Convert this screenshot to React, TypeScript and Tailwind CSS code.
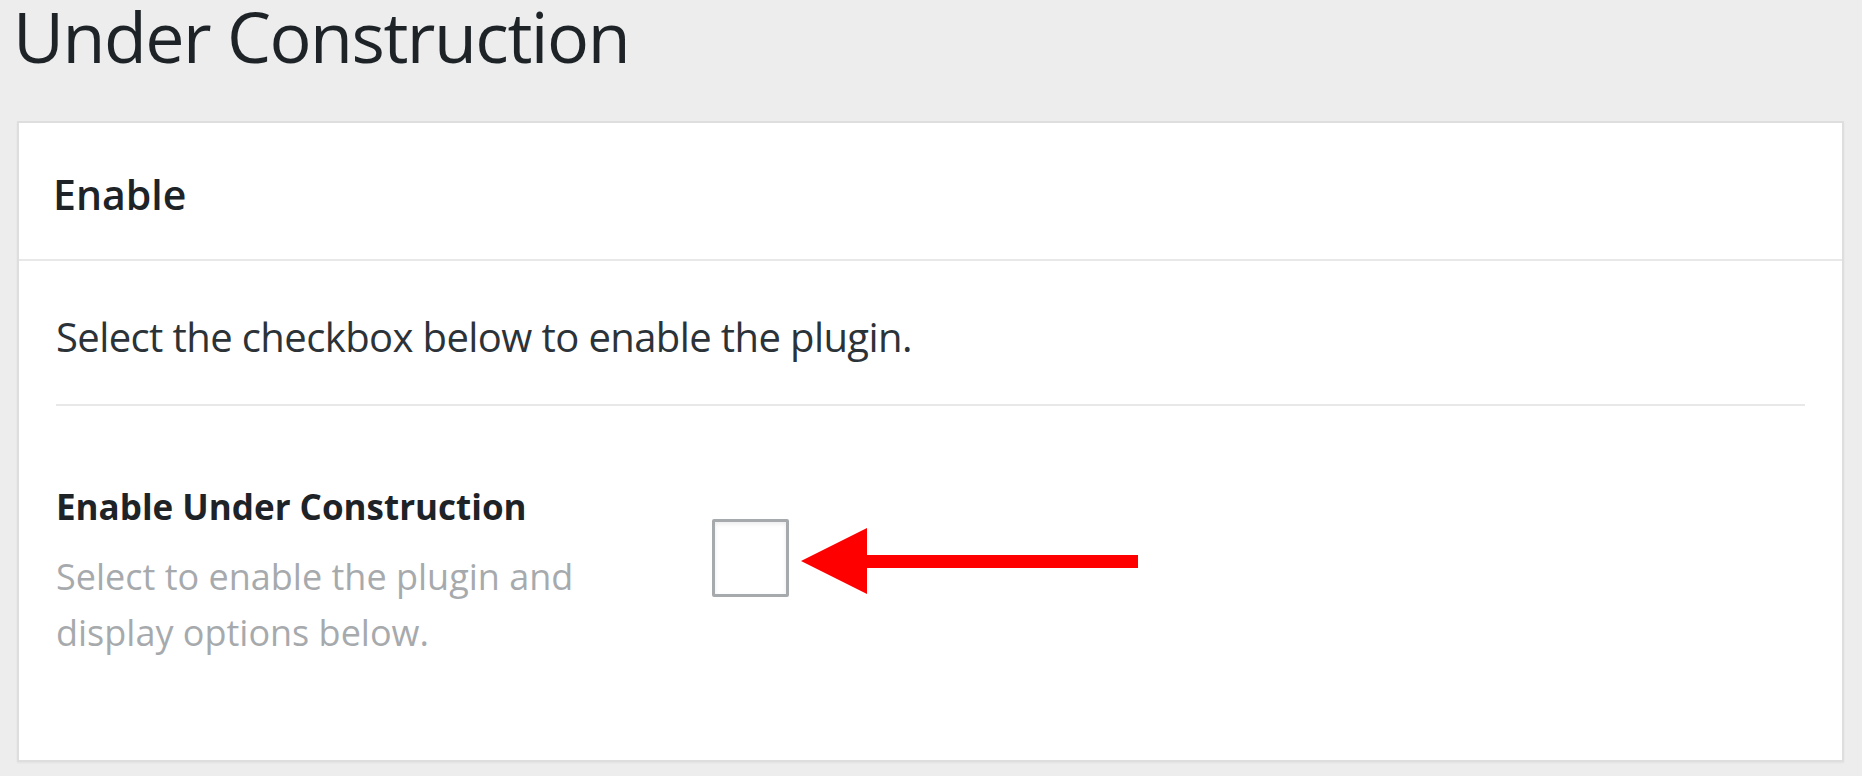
export default function App() {
  return (
    <div className="min-h-screen bg-[#ededed] pb-[14px] font-['Open_Sans',sans-serif]">
      <h1 className="m-0 pl-[13px] text-[70px] leading-[72px] tracking-[-1.5px] font-normal text-[#1d2327]">
        Under Construction
      </h1>

      {/* Settings card */}
      <div className="mt-[49px] mx-[17px] mr-[18px] bg-white border-2 border-[#dedede] shadow-[0_1px_2px_rgba(0,0,0,0.05)]">
        <div className="pl-[34px] pt-[43px] pb-[37px] border-b-2 border-[#e8e8e8]">
          <h2 className="m-0 text-[41px] leading-[56px] font-semibold text-[#1d2327]">Enable</h2>
        </div>

        <div className="px-[37px] pt-[50px] pb-[99px]">
          <p className="m-0 text-[40px] leading-[52px] tracking-[-0.6px] text-[#2c3338]">
            Select the checkbox below to enable the plugin.
          </p>
          <div className="mt-[41px] h-[2px] bg-[#e8e8e8]" />

          <div className="flex items-start pt-[77px]">
            <div className="w-[656px] shrink-0 pr-[30px]">
              <div className="text-[35px] leading-[48px] font-bold text-[#1d2327]">
                Enable Under Construction
              </div>
              <p className="m-0 mt-[18px] text-[36px] leading-[56px] text-[#a7aaad]">
                Select to enable the plugin and display options below.
              </p>
            </div>

            <div className="flex items-start mt-[36px]">
              <div className="w-[77px] h-[78px] border-[3px] border-[#a7aaad] rounded-[2px] bg-white shadow-[inset_0_2px_4px_rgba(0,0,0,0.08)]" />
              <svg
                className="ml-[12px] mt-[9px]"
                width="337"
                height="66"
                viewBox="0 0 337 66"
              >
                <polygon
                  points="0,33 66,0 66,27 337,27 337,40 66,40 66,66"
                  fill="#ff0000"
                />
              </svg>
            </div>
          </div>
        </div>
      </div>
    </div>
  );
}
